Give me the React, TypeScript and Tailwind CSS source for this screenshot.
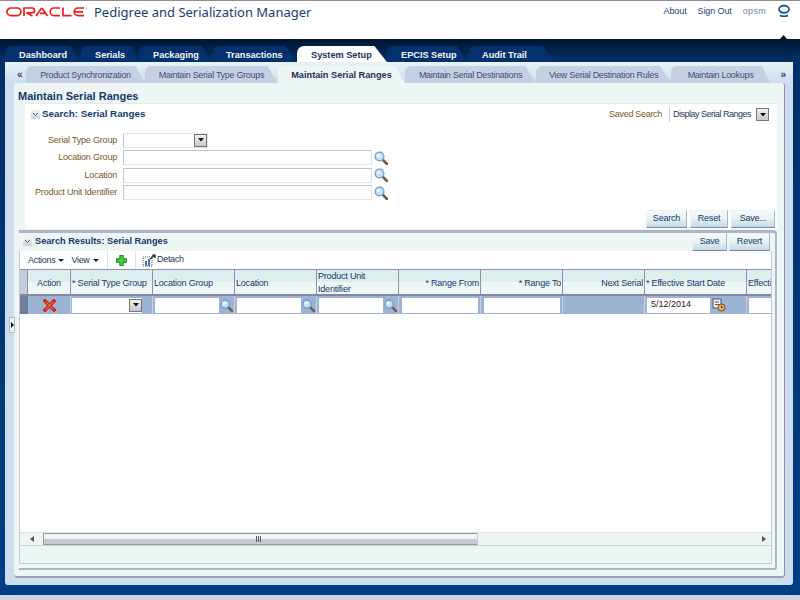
import React from "react";

const font = { fontFamily: '"Liberation Sans", Arial, sans-serif' };

function Magnifier({ size = 14 }: { size?: number }) {
  return (
    <svg width={size} height={size} viewBox="0 0 14 14" className="shrink-0">
      <line x1="8.5" y1="8.5" x2="13" y2="13" stroke="#7a5a3c" strokeWidth="2.6" strokeLinecap="round" />
      <circle cx="5.5" cy="5.5" r="4.4" fill="#c4def4" stroke="#6b9ccb" strokeWidth="1.3" />
      <circle cx="4.5" cy="4.5" r="1.6" fill="#f0f8ff" />
    </svg>
  );
}

function Arrow() {
  return (
    <svg width="6" height="3" viewBox="0 0 6 3" className="shrink-0">
      <path d="M0 0h6L3 3z" fill="#222" />
    </svg>
  );
}

function DropButton() {
  return (
    <div className="w-[13px] h-[13px] border border-[#77776f] bg-gradient-to-b from-[#f2f2f2] to-[#c9c4cf] flex items-center justify-center shrink-0">
      <svg width="6" height="4" viewBox="0 0 6 4"><path d="M0 0h6L3 3.5z" fill="#111" /></svg>
    </div>
  );
}

function Collapse() {
  return (
    <div className="w-[9px] h-[9px] bg-gradient-to-b from-[#f4f6f6] to-[#ccd4da] flex items-center justify-center shrink-0">
      <svg width="7" height="5" viewBox="0 0 7 5"><path d="M1 1l2.5 2.5L6 1" fill="none" stroke="#44546a" strokeWidth="1" /></svg>
    </div>
  );
}

function OracleLogo() {
  return (
    <svg width="82" height="10" viewBox="0 0 82 10" className="shrink-0">
      <g fill="none" stroke="#f01c1c" strokeWidth="1.7">
        <rect x="1" y="1" width="14" height="7.6" rx="3.8" />
        <path d="M18 9V1h8.2a2.2 2.2 0 0 1 0 4.8H20.5l6 3.2" />
        <path d="M30 9l5-7.2q.7-.8 1.4 0L41.5 9M34 6.3h5" />
        <path d="M54 1h-6a3.8 3.8 0 0 0 0 7.6h6" />
        <path d="M57 0.4v8.2h8.5" />
        <path d="M78 1h-6a3.8 3.8 0 0 0 0 7.6h6M68.8 4.8H77" />
      </g>
      <circle cx="80.5" cy="1" r="0.6" fill="#f01c1c" />
    </svg>
  );
}

function OracleRing() {
  return (
    <svg width="12" height="15" viewBox="0 0 12 15">
      <ellipse cx="6" cy="5.2" rx="5" ry="3.6" fill="none" stroke="#0b4da0" strokeWidth="1.7" />
      <path d="M2 11.5q4 1.6 8 0" fill="none" stroke="#0b4da0" strokeWidth="1.4" />
    </svg>
  );
}

const mainTabs: [string, number, boolean][] = [
  ["Dashboard", 76, false],
  ["Serials", 58, false],
  ["Packaging", 73, false],
  ["Transactions", 85, false],
  ["System Setup", 90, true],
  ["EPCIS Setup", 81, false],
  ["Audit Trail", 87, false],
];

const subTabs: [string, number, boolean][] = [
  ["Product Synchronization", 119, false],
  ["Maintain Serial Type Groups", 133, false],
  ["Maintain Serial Ranges", 127, true],
  ["Maintain Serial Destinations", 131, false],
  ["View Serial Destination Rules", 135, false],
  ["Maintain Lookups", 99, false],
];

function SearchRow({ label, wide }: { label: string; wide?: boolean }) {
  return (
    <div className="flex items-center h-[17.5px]">
      <div className="w-[98px] text-right text-[#77591f] text-[9px] tracking-[-0.2px] pr-[6px] shrink-0 whitespace-nowrap">{label}</div>
      {wide ? (
        <>
          <div className="w-[249px] h-[15px] bg-white border border-[#dfe6e6] border-t-[#b9c5d6] border-l-[#b9c5d6] shrink-0" />
          <div className="ml-[2px]"><Magnifier /></div>
        </>
      ) : (
        <div className="w-[85px] h-[15px] flex items-center justify-end bg-white border border-[#dfe6e6] border-l-[#b9c5d6] shrink-0">
          <DropButton />
        </div>
      )}
    </div>
  );
}

function Btn({ children, w }: { children: React.ReactNode; w: number }) {
  return (
    <div
      style={{ width: w }}
      className="h-[18px] flex items-center justify-center text-[9px] tracking-[-0.2px] text-[#0b3a70] border border-[#eef2f4] border-b-[#6f89a8] border-r-[#a7b5c4] bg-gradient-to-b from-[#f6fafa] via-[#e6f1f3] to-[#c5d9e2]"
    >
      {children}
    </div>
  );
}

function LovCell() {
  return (
    <div className="flex items-center ml-[2px]">
      <div className="w-[64px] h-[15px] bg-white" />
      <div className="ml-[1px]"><Magnifier size={13} /></div>
    </div>
  );
}

const cols: { w: number; label: React.ReactNode; align?: string; cell: React.ReactNode }[] = [
  {
    w: 43,
    label: "Action",
    align: "text-center",
    cell: (
      <div className="flex w-full justify-center">
        <svg width="13" height="13" viewBox="0 0 13 13">
          <path d="M2 2l9 9M11 2l-9 9" stroke="#c9230f" strokeWidth="3.6" strokeLinecap="square" />
          <path d="M2.5 2.5l8 8M10.5 2.5l-8 8" stroke="#f0603c" strokeWidth="1.2" />
        </svg>
      </div>
    ),
  },
  { w: 82, label: "* Serial Type Group", cell: <div className="ml-[1px] w-[70px] h-[15px] bg-white flex justify-end items-center"><DropButton /></div> },
  { w: 82, label: "Location Group", cell: <LovCell /> },
  { w: 82, label: "Location", cell: <LovCell /> },
  { w: 82, label: <span className="block leading-[13px] -mt-[2px]">Product Unit<br />Identifier</span>, cell: <LovCell /> },
  { w: 82, label: "* Range From", align: "text-right", cell: <div className="ml-[3px] w-[76px] h-[15px] bg-white" /> },
  { w: 82, label: "* Range To", align: "text-right", cell: <div className="ml-[3px] w-[76px] h-[15px] bg-white" /> },
  { w: 82, label: "Next Serial", align: "text-right", cell: null },
  {
    w: 102,
    label: "* Effective Start Date",
    cell: (
      <div className="flex items-center ml-[2px]">
        <div className="w-[63px] h-[15px] bg-white text-[9px] text-[#222] flex items-center pl-[4px]">5/12/2014</div>
        <svg width="14" height="14" viewBox="0 0 14 14" className="ml-[2px]">
          <rect x="1" y="1" width="8" height="9" fill="#eef2f6" stroke="#55585e" />
          <path d="M3 4h4M3 6.5h4" stroke="#55585e" />
          <circle cx="9.5" cy="9.5" r="3.6" fill="#e8b35a" stroke="#7a4a12" />
          <path d="M9.5 7.5v2.2h1.5" stroke="#6b2a10" fill="none" />
        </svg>
      </div>
    ),
  },
  { w: 26, label: <span className="block overflow-hidden">Effective</span>, cell: <div className="ml-[2px] w-[24px] h-[15px] bg-white" /> },
];

export default function App() {
  return (
    <div style={font} className="relative w-[800px] h-[600px] overflow-hidden flex flex-col bg-[#ccd6e8]">
      {/* Branding */}
      <div className="h-[39px] shrink-0 bg-white border-t border-[#8c8c90] flex items-start justify-between">
        <div className="flex items-center ml-[6px]">
          <OracleLogo />
          <span className="ml-[6px] text-[13px] leading-[22px] text-[#163d74]" style={{ fontFamily: '"Noto Sans", sans-serif' }}>Pedigree and Serialization Manager</span>
        </div>
        <div className="flex items-center mt-[3px] mr-[10px] text-[9px] tracking-[-0.1px] text-[#1d4478]">
          <span>About</span>
          <span className="ml-[11px]">Sign Out</span>
          <span className="ml-[11px] text-[#6d83a6] tracking-[0.3px]">opsm</span>
          <span className="ml-[12px]"><OracleRing /></span>
        </div>
      </div>

      {/* Navy area */}
      <div className="h-[556px] shrink-0 bg-gradient-to-b from-[#00152f] via-[#003068] via-[4%] to-[#003f85] flex flex-col">
        <div className="h-[23px] pl-[5px] pt-[7px] shrink-0 flex items-stretch">
          {mainTabs.map(([t, w, active]) => (
            <div
              key={t}
              style={{ width: w }}
              className={`flex items-center pl-[14px] pt-[4px] font-bold text-[9.2px] whitespace-nowrap rounded-tl-[7px] [clip-path:polygon(0_0,86%_0,100%_100%,0_100%)] ${active ? "bg-white text-[#1c3358]" : "bg-[#03316e] text-[#f2f5f8]"}`}
            >
              {t}
            </div>
          ))}
        </div>

        {/* Outer panel */}
        <div className="ml-[5px] mr-[7px] h-[523px] shrink-0 rounded-tr-[5px] rounded-b-[3px] bg-[#cddcee] flex flex-col relative">
          <div className="h-[21px] shrink-0 flex items-end pl-[21px] bg-gradient-to-b from-[#eaf3f3] to-[#cddcee] relative">
            <span className="absolute left-[12px] top-[8px] text-[10px] leading-[10px] font-bold text-[#24457a]">«</span>
            <span className="absolute right-[7px] top-[8px] text-[10px] leading-[10px] font-bold text-[#24457a]">»</span>
            {subTabs.map(([t, w, active]) => (
              <div
                key={t}
                style={{ width: w }}
                className={`h-[17px] pt-[3px] flex items-center justify-center whitespace-nowrap rounded-tl-[6px] [clip-path:polygon(0_0,92%_0,100%_100%,0_100%)] ${active ? "bg-[#eef5f5] font-bold text-[9.2px] text-[#1c3358]" : "bg-[#c7cfe2] text-[9px] tracking-[-0.3px] text-[#3c4f73]"}`}
              >
                {t}
              </div>
            ))}
          </div>

          {/* Page content */}
          <div className="ml-[9px] mr-[8px] h-[495px] rounded-t-[3px] rounded-b-[4px] bg-[#eef5f5] border-r border-[#8d94a8] border-b-2 border-b-[#9a9fb2] flex flex-col">
            <div className="h-[20px] shrink-0 pl-[4px] pt-[6px] flex items-center text-[11px] font-bold text-[#123a6c]">Maintain Serial Ranges</div>

            {/* Search box */}
            <div className="ml-[11px] mr-[7px] h-[126px] shrink-0 bg-white flex flex-col border-t border-[#dfeaea]">
              <div className="h-[17px] mt-[2px] flex items-center justify-between shrink-0">
                <div className="flex items-center ml-[6px]">
                  <Collapse />
                  <span className="ml-[2px] text-[9.8px] font-bold text-[#123a6c]">Search: Serial Ranges</span>
                </div>
                <div className="flex items-center mr-[8px]">
                  <span className="text-[9px] tracking-[-0.3px] text-[#77591f]">Saved Search</span>
                  <div className="ml-[7px] w-[100px] h-[15px] flex items-center justify-between border-l border-[#c8d0dc] pl-[3px]">
                    <span className="text-[9px] tracking-[-0.5px] text-[#2a3a50] whitespace-nowrap">Display Serial Ranges</span>
                    <DropButton />
                  </div>
                </div>
              </div>
              <div className="mt-[8.5px] flex flex-col">
                <SearchRow label="Serial Type Group" />
                <SearchRow label="Location Group" wide />
                <SearchRow label="Location" wide />
                <SearchRow label="Product Unit Identifier" wide />
              </div>
              <div className="mt-auto mb-[1px] mr-[2px] flex justify-end gap-[3px]">
                <Btn w={41}>Search</Btn>
                <Btn w={38}>Reset</Btn>
                <Btn w={44}>Save...</Btn>
              </div>
            </div>

            {/* Results box */}
            <div className="ml-[5px] mr-[7px] mt-[1px] flex-1 min-h-0 mb-[6px] rounded-tr-[4px] rounded-br-[3px] border-t-[3px] border-r-2 border-b-2 border-[#aeb4c8] bg-[#eef5f5] flex flex-col">
              <div className="h-[18px] shrink-0 flex items-center justify-between">
                <div className="flex items-center ml-[4px]">
                  <Collapse />
                  <span className="ml-[3px] text-[9.2px] font-bold text-[#123a6c]">Search Results: Serial Ranges</span>
                </div>
                <div className="flex gap-[2px] mr-[5px]">
                  <Btn w={35}>Save</Btn>
                  <Btn w={41}>Revert</Btn>
                </div>
              </div>
              <div className="flex-1 min-h-0 mb-[4px] mr-[3px] bg-white border-l border-r border-b border-[#c6c9d6] flex flex-col overflow-hidden">
                {/* Toolbar */}
                <div className="h-[18px] shrink-0 flex items-center text-[9px] tracking-[-0.3px] text-[#26385a]">
                  <div className="flex items-center pl-[8px] pt-[1px] w-[88px] h-full border-r border-[#dbe4e4]">
                    <span>Actions</span>
                    <span className="ml-[3px]"><Arrow /></span>
                    <span className="ml-[7px]">View</span>
                    <span className="ml-[3px]"><Arrow /></span>
                  </div>
                  <div className="w-[28px] h-full pr-[1px] flex items-center justify-center border-r border-[#dbe4e4]">
                    <svg width="13" height="13" viewBox="0 0 13 13"><path d="M6.5 1v11M1 6.5h11" stroke="#1f8c1f" strokeWidth="4.4" /><path d="M6.5 2v9M2 6.5h9" stroke="#4fd23f" strokeWidth="2.2" /></svg>
                  </div>
                  <svg width="14" height="13" viewBox="0 0 14 13" className="ml-[6px]">
                    <rect x="1" y="3" width="9" height="9" fill="none" stroke="#555" strokeDasharray="1 1" />
                    <rect x="3" y="7" width="2" height="5" fill="#3f76b5" />
                    <rect x="6" y="5" width="2" height="7" fill="#3f76b5" />
                    <path d="M8 5l5-4M10 1h3v3" fill="none" stroke="#222" strokeWidth="1.2" />
                  </svg>
                  <span className="ml-[1px]">Detach</span>
                </div>
                {/* Header */}
                <div className="h-[27px] shrink-0 flex border-t border-b-2 border-[#8f90ac] border-b-[#8484a4] bg-gradient-to-b from-[#deeeee] from-50% to-[#eef6f6] to-50% overflow-hidden">
                  <div className="w-[8px] shrink-0 bg-[#c6cdd6] border-r border-[#8f90ac]" />
                  {cols.map((c, i) => (
                    <div
                      key={i}
                      style={{ width: c.w }}
                      className={`shrink-0 h-full flex items-center pt-[3px] text-[9px] tracking-[-0.2px] text-[#123a6c] px-[1px] ${i < cols.length - 1 ? "border-r border-[#8f90ac]" : ""}`}
                    >
                      <div className={`w-full ${c.align ?? ""} whitespace-nowrap`}>{c.label}</div>
                    </div>
                  ))}
                </div>
                {/* Row */}
                <div className="h-[18px] shrink-0 flex bg-[#9db3d4] overflow-hidden">
                  <div className="w-[8px] shrink-0 bg-[#6f7f99]" />
                  {cols.map((c, i) => (
                    <div key={i} style={{ width: c.w }} className="shrink-0 h-full flex items-center border-r border-[#c6d2e4]">
                      {c.cell}
                    </div>
                  ))}
                </div>
                <div className="flex-1 min-h-0" />
                {/* Scrollbar */}
                <div className="h-[13px] shrink-0 flex bg-[#eef5f5] border-t border-[#dce6dc]">
                  <div className="w-[23px] flex items-center justify-center bg-[#eef5f5] shrink-0">
                    <svg width="4" height="6" viewBox="0 0 4 6"><path d="M4 0v6L0 3z" fill="#555" /></svg>
                  </div>
                  <div className="w-[435px] h-full border-l border-r border-t border-b border-[#98989a] border-r-[#c6c9d6] bg-gradient-to-b from-[#eef5f5] from-50% to-[#c8c9d8] to-50% flex items-center pl-[212px] shrink-0">
                    <span className="w-[6px] h-[6px] bg-[repeating-linear-gradient(90deg,#555_0,#555_1px,transparent_1px,transparent_2px)]" />
                  </div>
                  <div className="flex-1 flex items-center justify-end pr-[5px]">
                    <svg width="4" height="6" viewBox="0 0 4 6"><path d="M0 0v6L4 3z" fill="#555" /></svg>
                  </div>
                </div>
                <div className="h-[18px] shrink-0 bg-[#eef5f5] border-t border-[#cfd6d6]" />
              </div>
            </div>
          </div>
        </div>
      </div>

      {/* Overlays */}
      <div className="absolute left-[774px] top-[34px] w-[19px] h-[5px] bg-white flex items-center justify-center">
        <svg width="7" height="4" viewBox="0 0 7 4"><path d="M0 4h7L3.5 0z" fill="#111" /></svg>
      </div>
      <div className="absolute left-[9px] top-[317px] w-[6px] h-[16px] bg-[#eef5f5] border border-[#aeb8c6] flex items-center justify-center">
        <svg width="3" height="6" viewBox="0 0 3 6"><path d="M0 0v6l3-3z" fill="#111" /></svg>
      </div>
    </div>
  );
}
